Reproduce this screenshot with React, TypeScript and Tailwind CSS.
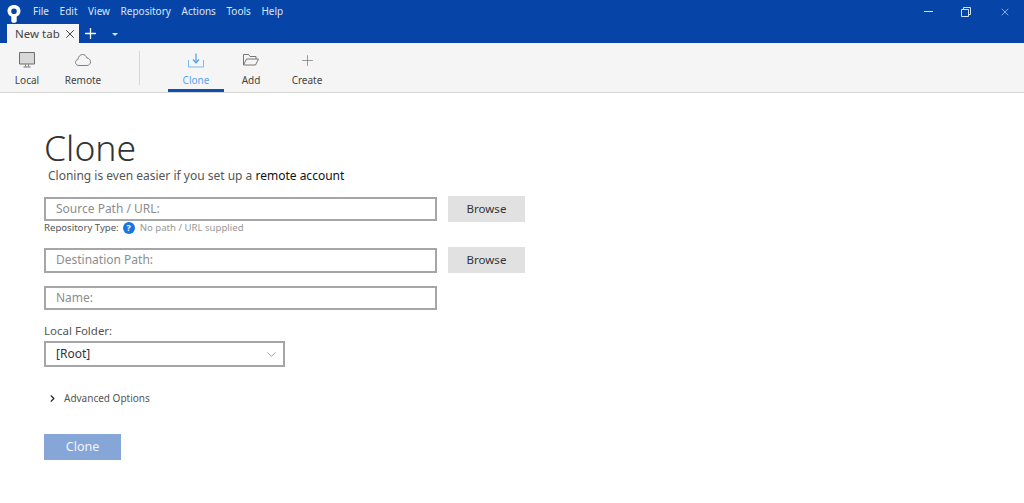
import { ChevronDown, ChevronRight, Plus, X } from 'lucide-react';

const menus = ['File', 'Edit', 'View', 'Repository', 'Actions', 'Tools', 'Help'];

function Logo() {
  return (
    <svg width="14" height="18" viewBox="0 0 14 18">
      <path
        fillRule="evenodd"
        fill="#fff"
        d="M7 0C3 0 .5 2.6.5 6c0 2.6 1.6 4.6 3.8 5.6V16c0 1 1 1.8 2.7 1.8S9.700 17 9.700 16v-4.400c2.200-1 3.800-3 3.800-5.600C13.500 2.600 11 0 7 0zM7 3.400A2.800 2.800 0 1 1 7 9a2.800 2.800 0 0 1 0-5.600z"
      />
    </svg>
  );
}

function LocalIcon() {
  return (
    <svg width="16" height="16" viewBox="0 0 16 16" fill="none">
      <path d="M.5.500h15v11.500H.5z" fill="#d8d8d8" stroke="#6d6d6d" />
      <path d="M6.500 12.500v2M9.500 12.500v2M4.500 15h7" stroke="#777" />
    </svg>
  );
}

function RemoteIcon() {
  return (
    <svg width="16" height="12" viewBox="0 0 16 12" fill="none">
      <path
        d="M4 11.500C2 11.500.5 10.200.5 8.500c0-1.500 1-2.700 2.300-3C3.300 2.500 5.200.5 7.500.5c2.100 0 3.800 1.500 4.400 3.500 2 .1 3.600 1.800 3.600 3.800 0 2-1.500 3.700-3.400 3.700z"
        stroke="#7d7d7d"
      />
    </svg>
  );
}

function CloneIcon() {
  return (
    <svg width="16" height="15" viewBox="0 0 16 15" fill="none">
      <path d="M8 .5v8.500" stroke="#4a9be8" strokeWidth="1.200" />
      <path d="M5 6.500 8 9.800l3-3.300" stroke="#4a9be8" strokeWidth="1.200" />
      <path d="M.5 7v7h15V7" stroke="#7db8ee" />
    </svg>
  );
}

function AddIcon() {
  return (
    <svg width="16" height="12" viewBox="0 0 16 12" fill="none">
      <path
        d="M.5 11V.500h5l1.500 2h6v2.500M.5 11l3-6h12L12.500 11z"
        stroke="#777"
      />
    </svg>
  );
}

function ToolItem({
  label,
  icon,
  active,
  className,
}: {
  label: string;
  icon: React.ReactNode;
  active?: boolean;
  className: string;
}) {
  return (
    <div className={`flex h-[49px] flex-col items-center border-b-[3px] ${active ? 'border-[#0e4fae] text-[#5aa5ef]' : 'border-transparent text-[#444]'} ${className}`}>
      <div className="mt-[8px] flex h-[18px] items-center justify-center">{icon}</div>
      <span className="mt-[4px] text-[10px] leading-[14px]">{label}</span>
    </div>
  );
}

function Field({ label, className }: { label: string; className: string }) {
  return (
    <div className={`flex w-[393px] items-center border-2 border-[#a6a6a6] bg-white pl-[10px] text-[12px] text-[#8d8d8d] ${className}`}>
      {label}
    </div>
  );
}

function BrowseButton() {
  return (
    <button className="ml-[11px] flex h-[26px] w-[77px] items-center justify-center bg-[#e1e1e1] text-[11.500px] text-[#333]">
      Browse
    </button>
  );
}

export default function App() {
  return (
    <div className="h-[503px] w-[1024px] overflow-hidden bg-white font-['Noto_Sans',sans-serif]">
      <header className="h-[43px] bg-[#0645a7]">
        <div className="flex h-[24px] items-center">
          <div className="ml-[7px] flex w-[26px] pt-[3px]">
            <Logo />
          </div>
          <nav className="mb-[2px] flex gap-[10.600px] text-[10px] text-[#dbe6f6]">
            {menus.map((menu) => (
              <span key={menu}>{menu}</span>
            ))}
          </nav>
          <div className="mb-[1px] ml-auto flex items-center text-[#d5e0f2]">
            <span className="mr-[28px] h-px w-[9px] bg-[#d5e0f2]" />
            <svg className="mr-[28px]" width="10" height="10" viewBox="0 0 10 10" fill="none" stroke="currentColor">
              <path d="M.5 2.500h7v7h-7zM2.500 2.500v-2h7v7h-2" />
            </svg>
            <X className="mr-[13px]" size={12} strokeWidth={1.300} />
          </div>
        </div>
        <div className="flex h-[19px] items-end">
          <div className="ml-[7px] flex h-[19px] w-[72px] items-center justify-between bg-[#f5f5f5] pl-[8px] pr-[2px] text-[11.500px] text-[#444]">
            New tab
            <X size={14} strokeWidth={1.700} />
          </div>
          <Plus className="mb-[1px] ml-[3px] text-white" size={17} strokeWidth={1.800} />
          <span className="mb-[7px] ml-[13px] border-x-[3px] border-t-[3px] border-x-transparent border-t-[#dbe6f6]" />
        </div>
      </header>

      <div className="flex h-[50px] border-b border-[#d4d4d4] bg-[#f5f5f5]">
        <ToolItem className="ml-[10px] w-[34px]" label="Local" icon={<LocalIcon />} />
        <ToolItem className="ml-[19px] w-[40px]" label="Remote" icon={<RemoteIcon />} />
        <div className="ml-[36px] mt-[8px] h-[34px] w-px bg-[#d6d6d6]" />
        <ToolItem className="ml-[28px] w-[56px]" active label="Clone" icon={<CloneIcon />} />
        <ToolItem className="ml-[7px] w-[40px]" label="Add" icon={<AddIcon />} />
        <ToolItem
          className="ml-[16px] w-[40px]"
          label="Create"
          icon={<Plus size={17} strokeWidth={0.900} className="text-[#666]" />}
        />
      </div>

      <main className="pl-[44px] pt-[32px]">
        <h1 className="h-[44px] text-[35.500px] font-light leading-[44px] text-[#333]">Clone</h1>
        <p className="ml-[4px] mt-[-2px] h-[18px] text-[12px] leading-[18px] text-[#555]">
          Cloning is even easier if you set up a <span className="text-[#111]">remote account</span>
        </p>

        <div className="mt-[11px] flex items-center">
          <Field className="h-[24px]" label="Source Path / URL:" />
          <BrowseButton />
        </div>
        <div className="mt-[-1px] flex h-[14px] items-center text-[9.600px] text-[#555]">
          Repository Type:
          <span className="ml-[4px] flex h-[12px] w-[12px] items-center justify-center rounded-full bg-[#1a73e8] text-[9px] font-bold text-white">
            ?
          </span>
          <span className="ml-[5px] text-[#999]">No path / URL supplied</span>
        </div>

        <div className="mt-[12px] flex items-center">
          <Field className="h-[25px]" label="Destination Path:" />
          <BrowseButton />
        </div>
        <div className="mt-[13px]">
          <Field className="h-[24px]" label="Name:" />
        </div>

        <div className="mt-[12px] text-[11.500px] leading-[18px] text-[#555]">Local Folder:</div>
        <div className="mt-[1px] flex h-[26px] w-[241px] items-center justify-between border-2 border-[#a6a6a6] pl-[10px] pr-[4px] text-[12px] text-[#333]">
          [Root]
          <ChevronDown size={15} strokeWidth={1} className="text-[#666]" />
        </div>

        <div className="ml-[3px] mt-[23px] flex h-[16px] items-center text-[10px] text-[#555]">
          <ChevronRight size={11} strokeWidth={2.500} className="text-[#222]" />
          <span className="ml-[6px]">Advanced Options</span>
        </div>

        <button className="mt-[28px] flex h-[26px] w-[77px] items-center justify-center bg-[#85a6d6] text-[12.500px] text-[#f2f5fa]">
          Clone
        </button>
      </main>
    </div>
  );
}
